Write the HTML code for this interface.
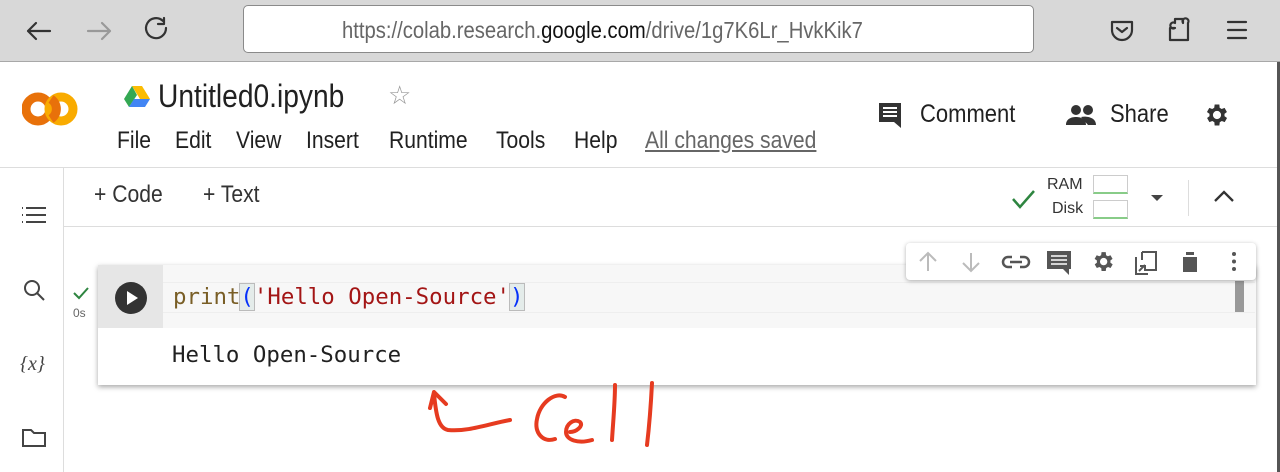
<!DOCTYPE html>
<html><head><meta charset="utf-8"><style>
*{margin:0;padding:0;box-sizing:border-box}
body{width:1280px;height:472px;overflow:hidden;background:#fff;font-family:"Liberation Sans",sans-serif;position:relative;color:#212121}
.abs{position:absolute;white-space:nowrap}
.mono{font-family:"DejaVu Sans Mono","Liberation Mono",monospace}
.cx{transform-origin:0 0;transform:scaleX(.88)}
</style></head><body>
<!-- browser bar -->
<div class="abs" style="left:0;top:0;width:1280px;height:62px;background:#d8d8d8;border-bottom:1px solid #a8a8a8"></div>
<svg class="abs" style="left:0;top:0" width="1280" height="62">
<g fill="none" stroke="#333" stroke-width="2.2" stroke-linecap="round" stroke-linejoin="round">
<path d="M28 31h22M28 31l8-8M28 31l8 8"/>
<path d="M88 31h22M110 31l-8-8M110 31l-8 8" stroke="#999"/>
<path d="M166 28a10 10 0 1 1-3-7M164 18v6h-6"/>
<path d="M266 21l10-4 10 4v8c0 7-5 11-10 13-5-2-10-6-10-13z"/>
<rect x="304" y="29" width="16" height="12" rx="2"/><path d="M307 29v-5a5 5 0 0 1 10 0v5"/>
<path d="M1010 19l3 7 8 1-6 5 2 8-7-4-7 4 2-8-6-5 8-1z"/>
<path d="M1112 22h20v8a10 10 0 0 1-20 0zM1117 28l5 4 5-4"/>
<path d="M1170 40v-12h5a3 3 0 1 1 0-5v-4h8v4a3 3 0 1 1 5 0h0v17z"/>
<path d="M1228 22h18M1228 30h18M1228 38h18"/>
</g></svg>
<div class="abs" style="left:243px;top:5px;width:791px;height:48px;background:#fff;border:1px solid #8a8a8a;border-radius:5px"></div>
<div class="abs" style="left:342px;top:17px;width:655px;overflow:hidden"><div class="cx" style="font-size:23px;color:#666;width:760px">https://colab.research.<span style="color:#111">google.com</span>/drive/1g7K6Lr_HvkKik7</div></div>
<div class="abs" style="left:1277px;top:62px;width:3px;height:410px;background:#555"></div>
<!-- logo -->
<svg class="abs" style="left:22px;top:86px" width="56" height="46">
<circle cx="16" cy="23" r="12" fill="none" stroke="#e8710a" stroke-width="9"/>
<circle cx="39" cy="23" r="12" fill="none" stroke="#f9ab00" stroke-width="9"/>
<path d="M29 13a12 12 0 0 1 0 20" fill="none" stroke="#e8710a" stroke-width="9"/>
</svg>
<svg class="abs" style="left:124px;top:85px" width="26" height="22"><path d="M8 1h10l8 13h-10z" fill="#fbbc04"/><path d="M8 1l5 9-8 12-5-8z" fill="#34a853"/><path d="M5 22l5-8h16l-5 8z" fill="#4285f4"/></svg>
<div class="abs cx" style="left:158px;top:78px;font-size:32px;color:#212121">Untitled0.ipynb</div>
<div class="abs" style="left:388px;top:80px;font-size:26px;color:#999">☆</div>
<div class="abs cx" style="left:117px;top:127px;font-size:24px">File</div>
<div class="abs cx" style="left:175px;top:127px;font-size:24px">Edit</div>
<div class="abs cx" style="left:236px;top:127px;font-size:24px">View</div>
<div class="abs cx" style="left:306px;top:127px;font-size:24px">Insert</div>
<div class="abs cx" style="left:389px;top:127px;font-size:24px">Runtime</div>
<div class="abs cx" style="left:496px;top:127px;font-size:24px">Tools</div>
<div class="abs cx" style="left:574px;top:127px;font-size:24px">Help</div>
<div class="abs cx" style="left:645px;top:127px;font-size:24px;color:#666;text-decoration:underline">All changes saved</div>
<svg class="abs" style="left:876px;top:100px" width="30" height="30"><path d="M3 3h22v19H8l-5 0z" fill="#333"/><path d="M18 22h7v6z" fill="#333"/><path d="M7 8h14M7 12h14M7 16h14" stroke="#fff" stroke-width="2"/></svg>
<div class="abs cx" style="left:920px;top:100px;font-size:25px">Comment</div>
<svg class="abs" style="left:1065px;top:104px" width="34" height="22"><circle cx="11" cy="6" r="5" fill="#333"/><circle cx="23" cy="6" r="5" fill="#333"/><path d="M1 21c0-6 5-8 10-8s10 2 10 8zM16 13c5-1 15 0 15 8h-8" fill="#333"/></svg>
<div class="abs cx" style="left:1110px;top:100px;font-size:25px">Share</div>
<svg class="abs" style="left:1203px;top:101px" width="28" height="28" viewBox="0 0 24 24"><path fill="#333" d="M19.4 13a7.5 7.5 0 0 0 0-2l2.1-1.6-2-3.5-2.5 1a7 7 0 0 0-1.7-1L15 3h-4l-.4 2.9a7 7 0 0 0-1.7 1l-2.5-1-2 3.5L6.6 11a7.5 7.5 0 0 0 0 2l-2.1 1.6 2 3.5 2.5-1a7 7 0 0 0 1.7 1L11 21h4l.4-2.9a7 7 0 0 0 1.7-1l2.5 1 2-3.5zM13 15.5a3.5 3.5 0 1 1 0-7 3.5 3.5 0 0 1 0 7z" transform="translate(-1 0)"/></svg>
<div class="abs" style="left:0;top:167px;width:1277px;height:1px;background:#ddd"></div>
<!-- sidebar -->
<div class="abs" style="left:63px;top:168px;width:1px;height:304px;background:#ddd"></div>
<svg class="abs" style="left:0;top:168px" width="64" height="304"><g fill="none" stroke="#444" stroke-width="2">
<path d="M26 40h20M26 47h20M26 54h20M22 40h1M22 47h1M22 54h1"/>
<circle cx="32" cy="120" r="7"/><path d="M37 125l7 7"/>
<path d="M23 262h8l3 3h11v13H23z"/></g>
<text x="20" y="202" font-family="Liberation Serif" font-style="italic" font-size="20" fill="#444">{x}</text></svg>
<!-- toolbar -->
<div class="abs cx" style="left:94px;top:181px;font-size:24px;color:#333">+ Code</div>
<div class="abs cx" style="left:203px;top:181px;font-size:24px;color:#333">+ Text</div>
<svg class="abs" style="left:1010px;top:188px" width="28" height="22"><path d="M3 11l7 8 14-16" fill="none" stroke="#2e8540" stroke-width="2.5"/></svg>
<div class="abs" style="left:1047px;top:176px;font-size:16px;color:#333">RAM</div>
<div class="abs" style="left:1052px;top:200px;font-size:16px;color:#333">Disk</div>
<div class="abs" style="left:1093px;top:175px;width:35px;height:19px;border:1px solid #ccc;border-bottom:2px solid #8c8"></div>
<div class="abs" style="left:1093px;top:200px;width:35px;height:19px;border:1px solid #ccc;border-bottom:2px solid #8c8"></div>
<svg class="abs" style="left:1150px;top:193px" width="14" height="10"><path d="M1 2h12l-6 6z" fill="#444"/></svg>
<div class="abs" style="left:1188px;top:180px;width:1px;height:36px;background:#ddd"></div>
<svg class="abs" style="left:1212px;top:188px" width="24" height="16"><path d="M3 13l9-9 9 9" fill="none" stroke="#333" stroke-width="2.3"/></svg>
<div class="abs" style="left:64px;top:226px;width:1213px;height:1px;background:#ddd"></div>
<!-- cell -->
<svg class="abs" style="left:72px;top:285px" width="18" height="16"><path d="M2 8l5 5 9-10" fill="none" stroke="#2e8540" stroke-width="2"/></svg>
<div class="abs" style="left:73px;top:306px;font-size:12px;color:#666">0s</div>
<div class="abs" style="left:98px;top:265px;width:1158px;height:120px;background:#fff;box-shadow:0 2px 5px rgba(0,0,0,.35)"></div>
<div class="abs" style="left:98px;top:265px;width:1158px;height:63px;background:#f7f7f7"></div>
<div class="abs" style="left:98px;top:265px;width:65px;height:63px;background:#e6e6e6"></div>
<svg class="abs" style="left:113px;top:280px" width="36" height="36"><circle cx="18" cy="18" r="16" fill="#333"/><path d="M14 11v14l11-7z" fill="#fff"/></svg>
<div class="abs" style="left:163px;top:282px;width:1092px;height:31px;border-top:1px solid #eee;border-bottom:1px solid #eee"></div>
<div class="abs" style="left:1235px;top:281px;width:9px;height:31px;background:#999"></div>
<div class="abs mono" style="left:173px;top:284px;font-size:22.4px;white-space:pre"><span style="color:#795e26">print</span><span style="color:#0431fa;background:#e4ecea;outline:1px solid #bbb">(</span><span style="color:#a31515">'Hello Open-Source'</span><span style="color:#0431fa;background:#e4ecea;outline:1px solid #bbb">)</span></div>
<div class="abs mono" style="left:172px;top:342px;font-size:22.4px;color:#212121">Hello Open-Source</div>
<!-- floating toolbar -->
<div class="abs" style="left:906px;top:243px;width:350px;height:37px;background:#fff;border-radius:4px;box-shadow:0 1px 4px rgba(0,0,0,.3)"></div>
<svg class="abs" style="left:906px;top:243px" width="350" height="37"><g fill="none" stroke-width="2">
<path d="M22 28V10M14 18l8-8 8 8" stroke="#bbb"/>
<path d="M65 10v18M57 20l8 8 8-8" stroke="#bbb"/>
<path d="M106 14h-4a5 5 0 0 0 0 10h4M114 14h4a5 5 0 0 1 0 10h-4M104 19h12" stroke="#555" stroke-width="2.5"/></g>
<path d="M141 8h24v18h-2v6l-6-6h-16z" fill="#555"/><path d="M145 13h16M145 17h16M145 21h16" stroke="#fff" stroke-width="1.5"/>
<g transform="translate(184 6) scale(1.05)"><path fill="#555" d="M19.4 13a7.5 7.5 0 0 0 0-2l2.1-1.6-2-3.5-2.5 1a7 7 0 0 0-1.7-1L15 3h-4l-.4 2.9a7 7 0 0 0-1.7 1l-2.5-1-2 3.5L6.6 11a7.5 7.5 0 0 0 0 2l-2.1 1.6 2 3.5 2.5-1a7 7 0 0 0 1.7 1L11 21h4l.4-2.9a7 7 0 0 0 1.7-1l2.5 1 2-3.5zM13 15.5a3.5 3.5 0 1 1 0-7 3.5 3.5 0 0 1 0 7z"/></g>
<path d="M236 9h14v18h-10M236 9v8M230 14v17h12M233 28l6-6M234 23h5v5" fill="none" stroke="#555" stroke-width="2"/>
<path d="M275 12h18M280 12v-3h8v3M277 14h14v15h-14z" fill="#555"/>
<circle cx="328" cy="11" r="2" fill="#555"/><circle cx="328" cy="18.5" r="2" fill="#555"/><circle cx="328" cy="26" r="2" fill="#555"/>
</svg>
<!-- annotation -->
<svg class="abs" style="left:0;top:0" width="1280" height="472"><g fill="none" stroke="#e63b20" stroke-width="4" stroke-linecap="round" stroke-linejoin="round">
<path d="M430 408l4-16 12 12M434 394c2 20 4 34 14 36 20 2 40-6 62-10"/>
<path d="M565 397c-10-6-25 6-28 22-3 14 6 24 18 20"/>
<path d="M570 432c6 0 14-6 10-10-6-4-14 2-14 10 0 8 12 12 26 8"/>
<path d="M615 385c0 18-2 38-3 55M652 383c-1 20-3 45-5 62"/>
</g></svg>
</body></html>
